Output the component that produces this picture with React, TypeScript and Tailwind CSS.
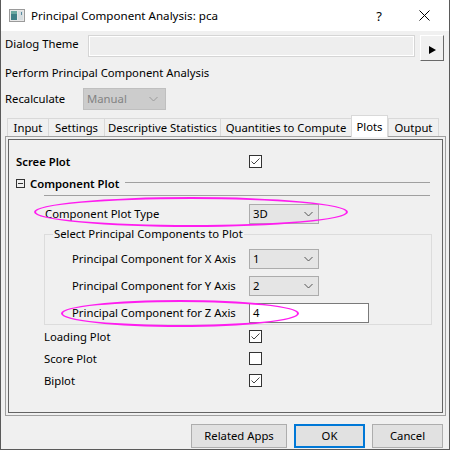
import React from "react";

const FONT = "font-['Noto_Sans','Liberation_Sans',sans-serif]";

function Check({ checked }: { checked: boolean }) {
  return (
    <div className="w-[13px] h-[13px] border border-[#333333] bg-white flex items-center justify-center">
      {checked && (
        <svg width="11" height="11" viewBox="0 0 11 11">
          <path d="M1.5 5.5 L4 8 L9.5 2.5" fill="none" stroke="#444444" strokeWidth="1" />
        </svg>
      )}
    </div>
  );
}

function Chevron({ color = "#555555" }: { color?: string }) {
  return (
    <svg width="9" height="6" viewBox="0 0 9 6">
      <path d="M0.5 1 L4.5 5 L8.5 1" fill="none" stroke={color} strokeWidth="1" />
    </svg>
  );
}

function Select({ value }: { value: string }) {
  return (
    <div className="w-[70px] h-[20px] bg-[#e5e5e5] border border-[#acacac] flex items-center justify-between pl-[3px] pr-[5px]">
      <span>{value}</span>
      <Chevron />
    </div>
  );
}

const tabs = [
  { name: "Input", w: "w-[41px]" },
  { name: "Settings", w: "w-[56px]" },
  { name: "Descriptive Statistics", w: "w-[116px]" },
  { name: "Quantities to Compute", w: "w-[131px]" },
  { name: "Plots", w: "w-[37px]", active: true },
  { name: "Output", w: "w-[51px]" },
];

function App() {
  return (
    <div
      className={`relative w-[450px] h-[450px] bg-[#f0f0f0] border-x border-b border-[#5a5a5a] text-[11.3px] leading-[16px] text-black whitespace-nowrap ${FONT}`}
    >
      {/* title bar */}
      <div className="h-[31px] bg-white flex items-center">
        <svg className="ml-[8px]" width="16" height="13" viewBox="0 0 16 13">
          <rect x="0.5" y="0.5" width="15" height="12" fill="#e8e8e8" stroke="#9a9a9a" />
          <rect x="2" y="2" width="6" height="9" fill="#3f7f86" />
          <rect x="2" y="2" width="6" height="3" fill="#6aa8a0" />
          <rect x="9" y="2" width="5" height="9" fill="#d6dde0" />
          <rect x="12" y="3" width="1" height="3" fill="#5a8aa0" />
        </svg>
        <span className="ml-[6px] text-[11.6px]">Principal Component Analysis: pca</span>
        <span className="ml-auto mr-[37px] text-[13px]">?</span>
        <svg className="mr-[19px]" width="11" height="11" viewBox="0 0 11 11">
          <path d="M0.5 0.5 L10.5 10.5 M10.5 0.5 L0.5 10.5" stroke="#000" strokeWidth="1" />
        </svg>
      </div>

      <div className="px-[4px]">
        {/* dialog theme */}
        <div className="mt-[4px] flex items-start h-[26px]">
          <div className="w-[83px] h-[16px] mt-[1px]">Dialog Theme</div>
          <div className="w-[327px] h-[22px] border border-[#d5d5d5] bg-[#f0f0f0]">
            <div className="w-full h-full border border-white bg-[#eeeeee]" />
          </div>
          <div className="ml-[5px] w-[24px] h-[26px] bg-[#f0f0f0] border-t border-l border-white border-r border-b border-r-[#696969] border-b-[#696969] flex items-center justify-center">
            <svg width="7" height="8" viewBox="0 0 7 8" className="mt-[3px] ml-[1px]">
              <path d="M0 0 L7 4 L0 8 Z" fill="#000" />
            </svg>
          </div>
        </div>

        <div className="mt-[4px] h-[16px]">Perform Principal Component Analysis</div>

        {/* recalculate */}
        <div className="mt-[7px] flex items-center h-[22px]">
          <div className="w-[78px]">Recalculate</div>
          <div className="w-[83px] h-[22px] bg-[#cccccc] border border-[#bfbfbf] flex items-center justify-between pl-[3px] pr-[7px] text-[#838383]">
            <span>Manual</span>
            <Chevron color="#9a9a9a" />
          </div>
        </div>

        {/* tabs */}
        <div className="mt-[5px] ml-[2px] flex items-end h-[21px]">
          {tabs.map((t) =>
            t.active ? (
              <div
                key={t.name}
                className={`${t.w} h-[22px] -mb-[1px] bg-white border-t border-x border-[#d9d9d9] flex items-center justify-center relative z-10`}
              >
                {t.name}
              </div>
            ) : (
              <div
                key={t.name}
                className={`${t.w} h-[18px] bg-[#f0f0f0] border-t border-l border-[#d9d9d9] last:border-r flex items-center justify-center`}
              >
                {t.name}
              </div>
            )
          )}
        </div>

        {/* panel */}
        <div className="w-[441px] h-[280px] border border-[#a0a0a0] p-[2px]">
          <div className="w-full h-full border border-[#646464] relative">
            {/* scree plot */}
            <div className="mt-[15px] flex items-center h-[13px] pl-[7px]">
              <div className="w-[233px] font-semibold">Scree Plot</div>
              <Check checked />
            </div>

            {/* component plot header */}
            <div className="mt-[9px] flex items-center h-[13px] pl-[7px] pr-[12px]">
              <div className="w-[9px] h-[9px] border border-[#333] flex items-center justify-center">
                <div className="w-[5px] h-px bg-[#333]" />
              </div>
              <div className="ml-[5px] font-semibold">Component Plot</div>
              <div className="flex-1 ml-[6px] mt-[-2px] border-t border-[#a0a0a0]" />
            </div>
            <div className="mt-[5px] ml-[35px] mr-[12px] border-t border-[#a0a0a0]" />

            {/* component plot type */}
            <div className="mt-[8px] flex items-center h-[20px] pl-[36px]">
              <div className="w-[204px]">Component Plot Type</div>
              <Select value="3D" />
            </div>

            {/* group */}
            <fieldset className="mt-[2px] ml-[35px] w-[388px] border border-[#dcdcdc] pb-[1px]">
              <legend className="ml-[8px] px-[1px] leading-[16px]">Select Principal Components to Plot</legend>
              <div className="mt-[7px] flex flex-col gap-[7px] pl-[27px]">
                <div className="flex items-center h-[20px]">
                  <div className="w-[177px]">Principal Component for X Axis</div>
                  <Select value="1" />
                </div>
                <div className="flex items-center h-[20px]">
                  <div className="w-[177px]">Principal Component for Y Axis</div>
                  <Select value="2" />
                </div>
                <div className="flex items-center h-[20px]">
                  <div className="w-[177px]">Principal Component for Z Axis</div>
                  <div className="w-[120px] h-[20px] bg-white border border-[#7a7a7a] pl-[3px] flex items-center">
                    4
                  </div>
                </div>
              </div>
            </fieldset>

            {/* checkboxes */}
            <div className="mt-[5px] flex flex-col gap-[9px] pl-[35px]">
              <div className="flex items-center h-[13px]">
                <div className="w-[205px]">Loading Plot</div>
                <Check checked />
              </div>
              <div className="flex items-center h-[13px]">
                <div className="w-[205px]">Score Plot</div>
                <Check checked={false} />
              </div>
              <div className="flex items-center h-[13px]">
                <div className="w-[205px]">Biplot</div>
                <Check checked />
              </div>
            </div>
          </div>
        </div>

        {/* footer */}
        <div className="mt-[8px] flex justify-end gap-[7px] pr-[2px]">
          <div className="w-[96px] h-[24px] bg-[#e1e1e1] border border-[#adadad] flex items-center justify-center">
            Related Apps
          </div>
          <div className="w-[71px] h-[24px] bg-[#e1e1e1] border-2 border-[#0078d7] flex items-center justify-center">
            OK
          </div>
          <div className="w-[71px] h-[24px] bg-[#e1e1e1] border border-[#adadad] flex items-center justify-center">
            Cancel
          </div>
        </div>
      </div>

      {/* highlight ellipses */}
      <div className="absolute left-[33px] top-[197px] w-[314px] h-[30px] rounded-[50%] border-2 border-[#ff1cf0] pointer-events-none" />
      <div className="absolute left-[60px] top-[300px] w-[238px] h-[27px] rounded-[50%] border-2 border-[#ff1cf0] pointer-events-none" />
    </div>
  );
}

export default App;
